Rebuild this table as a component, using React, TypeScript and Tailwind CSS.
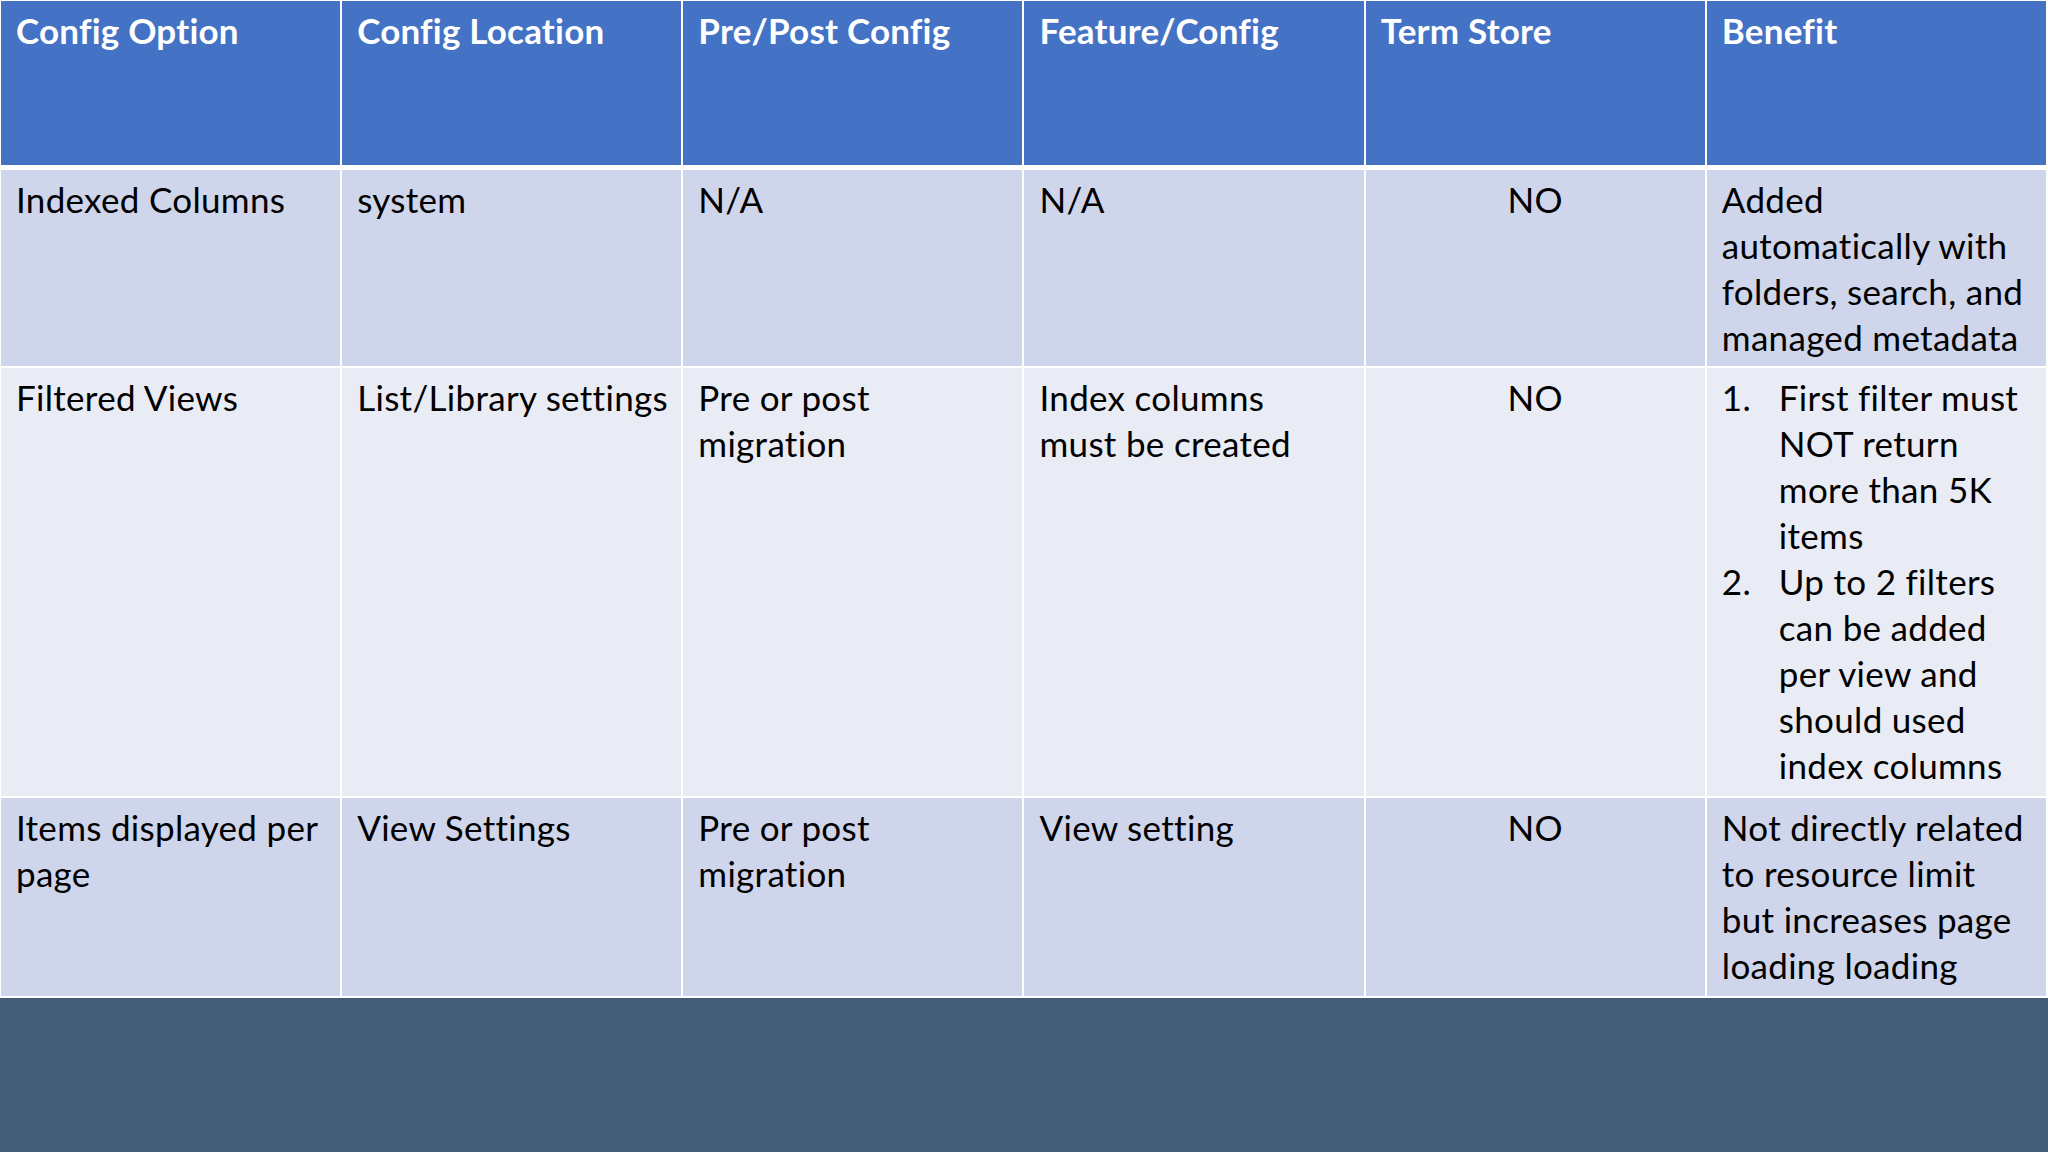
import React from "react";

const font = { fontFamily: '"Lato", "Liberation Sans", sans-serif' };

function Lines({ lines }: { lines: string[] }) {
  return (
    <>
      {lines.map((l, i) => (
        <span key={i} className="block whitespace-nowrap">
          {l}
        </span>
      ))}
    </>
  );
}

function Cell({
  children,
  bg,
  center = false,
}: {
  children: React.ReactNode;
  bg: string;
  center?: boolean;
}) {
  return (
    <div
      className={`${bg} pl-[15px] pr-[15px] pt-[6px] text-[35px] leading-[46px] tracking-[0.3px] text-black ${
        center ? "text-center" : ""
      }`}
    >
      {children}
    </div>
  );
}

function NumItem({ n, lines }: { n: string; lines: string[] }) {
  return (
    <div className="flex">
      <span className="w-[57px] shrink-0 whitespace-nowrap">{n}</span>
      <div>
        <Lines lines={lines} />
      </div>
    </div>
  );
}

export default function App() {
  const headers = [
    "Config Option",
    "Config Location",
    "Pre/Post Config",
    "Feature/Config",
    "Term Store",
    "Benefit",
  ];
  const r1 = "bg-[#cfd5ea]";
  const r2 = "bg-[#e9ebf5]";
  return (
    <div className="w-[2048px] h-[1152px] bg-[#445e7a] flex flex-col" style={font}>
      <div className="bg-white pt-[1px] pl-[1px] pr-[2px] pb-[2px] flex flex-col">
        <div className="grid grid-cols-6 gap-x-[2px] h-[164px]">
          {headers.map((h) => (
            <div
              key={h}
              className="bg-[#4472c4] pl-[15px] pt-[6px] text-[35px] leading-[46px] tracking-[0.2px] font-bold text-white whitespace-nowrap"
            >
              {h}
            </div>
          ))}
        </div>
        <div className="h-[5px]" />
        <div className="grid grid-cols-6 gap-[2px] grid-rows-[196px_428px_198px]">
          <Cell bg={r1}>
            <Lines lines={["Indexed Columns"]} />
          </Cell>
          <Cell bg={r1}>
            <Lines lines={["system"]} />
          </Cell>
          <Cell bg={r1}>
            <Lines lines={["N/A"]} />
          </Cell>
          <Cell bg={r1}>
            <Lines lines={["N/A"]} />
          </Cell>
          <Cell bg={r1} center>
            NO
          </Cell>
          <Cell bg={r1}>
            <Lines
              lines={[
                "Added",
                "automatically with",
                "folders, search, and",
                "managed metadata",
              ]}
            />
          </Cell>

          <Cell bg={r2}>
            <Lines lines={["Filtered Views"]} />
          </Cell>
          <Cell bg={r2}>
            <Lines lines={["List/Library settings"]} />
          </Cell>
          <Cell bg={r2}>
            <Lines lines={["Pre or post", "migration"]} />
          </Cell>
          <Cell bg={r2}>
            <Lines lines={["Index columns", "must be created"]} />
          </Cell>
          <Cell bg={r2} center>
            NO
          </Cell>
          <Cell bg={r2}>
            <NumItem
              n="1."
              lines={["First filter must", "NOT return", "more than 5K", "items"]}
            />
            <NumItem
              n="2."
              lines={[
                "Up to 2 filters",
                "can be added",
                "per view and",
                "should used",
                "index columns",
              ]}
            />
          </Cell>

          <Cell bg={r1}>
            <Lines lines={["Items displayed per", "page"]} />
          </Cell>
          <Cell bg={r1}>
            <Lines lines={["View Settings"]} />
          </Cell>
          <Cell bg={r1}>
            <Lines lines={["Pre or post", "migration"]} />
          </Cell>
          <Cell bg={r1}>
            <Lines lines={["View setting"]} />
          </Cell>
          <Cell bg={r1} center>
            NO
          </Cell>
          <Cell bg={r1}>
            <Lines
              lines={[
                "Not directly related",
                "to resource limit",
                "but increases page",
                "loading loading",
              ]}
            />
          </Cell>
        </div>
      </div>
    </div>
  );
}
